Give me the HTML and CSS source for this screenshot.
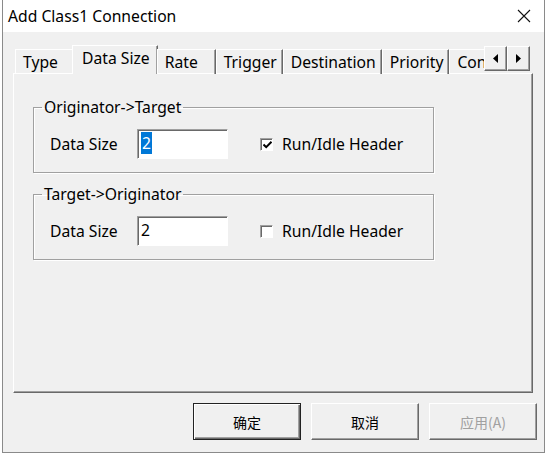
FILE: index.html
```html
<!DOCTYPE html>
<html lang="en">
<head>
    <meta charset="UTF-8">
    <title>Add Class1 Connection</title>
    <link rel="stylesheet" href="styles.css">
</head>
<body>
    <div class="window">
        <div class="titlebar">
            <span class="title">Add Class1 Connection</span>
            <svg class="close" width="14" height="14" viewBox="0 0 14 14">
                <path d="M1 1 L13 13 M13 1 L1 13" stroke="#111" stroke-width="1.1" fill="none"/>
            </svg>
        </div>
        <div class="client">
            <div class="tabs">
                <div class="tab">Type</div>
                <div class="tab active">Data Size</div>
                <div class="tab">Rate</div>
                <div class="tab">Trigger</div>
                <div class="tab">Destination</div>
                <div class="tab">Priority</div>
                <div class="tab tab-cut">Connection</div>
                <div class="scroller">
                    <div class="arrow">
                        <svg width="5" height="9" viewBox="0 0 5 9"><path d="M5 0 L0 4.5 L5 9 Z" fill="#000"/></svg>
                    </div>
                    <div class="arrow">
                        <svg width="5" height="9" viewBox="0 0 5 9"><path d="M0 0 L5 4.5 L0 9 Z" fill="#000"/></svg>
                    </div>
                </div>
            </div>
            <div class="panel">
                <fieldset class="group">
                    <legend>Originator-&gt;Target</legend>
                    <div class="row">
                        <span class="label">Data Size</span>
                        <div class="textbox"><span class="sel">2</span></div>
                        <span class="check checked">
                            <svg width="9" height="8" viewBox="0 0 9 8"><path d="M0.5 3.5 L3.2 6.2 L8.5 0.8" stroke="#000" stroke-width="2" fill="none"/></svg>
                        </span>
                        <span class="check-label">Run/Idle Header</span>
                    </div>
                </fieldset>
                <fieldset class="group">
                    <legend>Target-&gt;Originator</legend>
                    <div class="row">
                        <span class="label">Data Size</span>
                        <div class="textbox">2</div>
                        <span class="check"></span>
                        <span class="check-label">Run/Idle Header</span>
                    </div>
                </fieldset>
            </div>
            <div class="buttons">
                <button class="btn default">确定</button>
                <button class="btn">取消</button>
                <button class="btn" disabled>应用(A)</button>
            </div>
        </div>
    </div>
</body>
</html>
```

FILE: styles.css
```css
body {
    margin: 0;
    background-color: #fff;
    font-family: "Noto Sans", "Noto Sans CJK SC", sans-serif;
    font-size: 15.7px;
    color: #000;
}
.window {
    margin-left: 2px;
    width: 543px;
    height: 453px;
    box-sizing: border-box;
    border: 1px solid #8a8a8a;
    border-top: none;
    background-color: #f0f0f0;
    display: flex;
    flex-direction: column;
}
.titlebar {
    height: 32px;
    background-color: #fff;
    display: flex;
    align-items: center;
    padding-left: 5px;
    padding-right: 13px;
}
.title {
    flex: 1;
    font-size: 15.7px;
}
.close {
    display: block;
}
.client {
    flex: 1;
    padding: 13px 7px 0 10px;
}
.tabs {
    display: flex;
    align-items: flex-end;
    width: 520px;
    height: 29px;
    margin-bottom: -1px;
    position: relative;
    z-index: 1;
}
.tab {
    min-width: 59px;
    height: 25px;
    box-sizing: border-box;
    padding: 0 5px 0 7px;
    line-height: 24px;
    border-top: 1px solid #fff;
    border-left: 1px solid #fff;
    border-right: 1px solid #696969;
    box-shadow: inset -1px 0 #a0a0a0;
    white-space: nowrap;
}
.tab:first-child {
    margin-left: 2px;
}
.tab.active {
    height: 29px;
    line-height: 25px;
    margin-left: -2px;
    margin-right: -1px;
    padding: 0 7px 0 9px;
    background-color: #f0f0f0;
}
.tab-cut {
    min-width: 0;
    flex: 1;
    overflow: hidden;
    border-right: none;
    box-shadow: none;
}
.scroller {
    display: flex;
    align-self: flex-start;
    margin-top: 1px;
    margin-right: 3px;
}
.arrow {
    width: 23px;
    height: 25px;
    box-sizing: border-box;
    display: flex;
    align-items: center;
    justify-content: center;
    border: 1px solid;
    border-color: #fff #696969 #696969 #fff;
    box-shadow: inset -1px -1px #a0a0a0;
}
.panel {
    width: 520px;
    height: 320px;
    box-sizing: border-box;
    border: 1px solid;
    border-color: #fff #696969 #696969 #fff;
    box-shadow: inset -1px -1px #a0a0a0;
    padding: 23px 0 0 19px;
}
.group {
    width: 401px;
    box-sizing: border-box;
    margin: 0 0 11px 0;
    padding: 0 0 13px 16px;
    border: 1px solid #a0a0a0;
    box-shadow: inset 1px 1px #fff, 1px 1px #fff;
}
.group legend {
    margin-left: -8px;
    padding: 0 2px;
    line-height: 20px;
}
.row {
    display: flex;
    align-items: center;
    margin-top: 12px;
    height: 30px;
}
.label {
    width: 87px;
}
.textbox {
    width: 91px;
    height: 30px;
    box-sizing: border-box;
    background-color: #fff;
    border: 1px solid;
    border-color: #a0a0a0 #fff #fff #a0a0a0;
    box-shadow: inset 1px 1px #696969;
    padding: 2px 0 0 3px;
    line-height: 22px;
}
.sel {
    background-color: #0078d7;
    color: #fff;
    padding: 0 1px;
}
.check {
    width: 13px;
    height: 13px;
    box-sizing: border-box;
    margin-left: 32px;
    margin-right: 9px;
    background-color: #fff;
    border: 1px solid;
    border-color: #a0a0a0 #fff #fff #a0a0a0;
    box-shadow: inset 1px 1px #696969;
    display: flex;
    align-items: center;
    justify-content: center;
}
.check svg {
    margin: 1px 0 0 1px;
}
.buttons {
    display: flex;
    justify-content: flex-end;
    gap: 10px;
    margin-top: 10px;
}
.btn {
    width: 108px;
    height: 37px;
    font-family: "Noto Sans CJK SC", sans-serif;
    font-size: 14px;
    color: #000;
    background-color: #f0f0f0;
    border: 1px solid;
    border-color: #fff #696969 #696969 #fff;
    box-shadow: inset -1px -1px #a0a0a0;
    padding: 0;
}
.btn.default {
    border: 1px solid #222;
    box-shadow: inset 1px 1px #fff, inset -1px -1px #696969, inset -2px -2px #a0a0a0;
}
.btn:disabled {
    color: #a0a0a0;
}
```
